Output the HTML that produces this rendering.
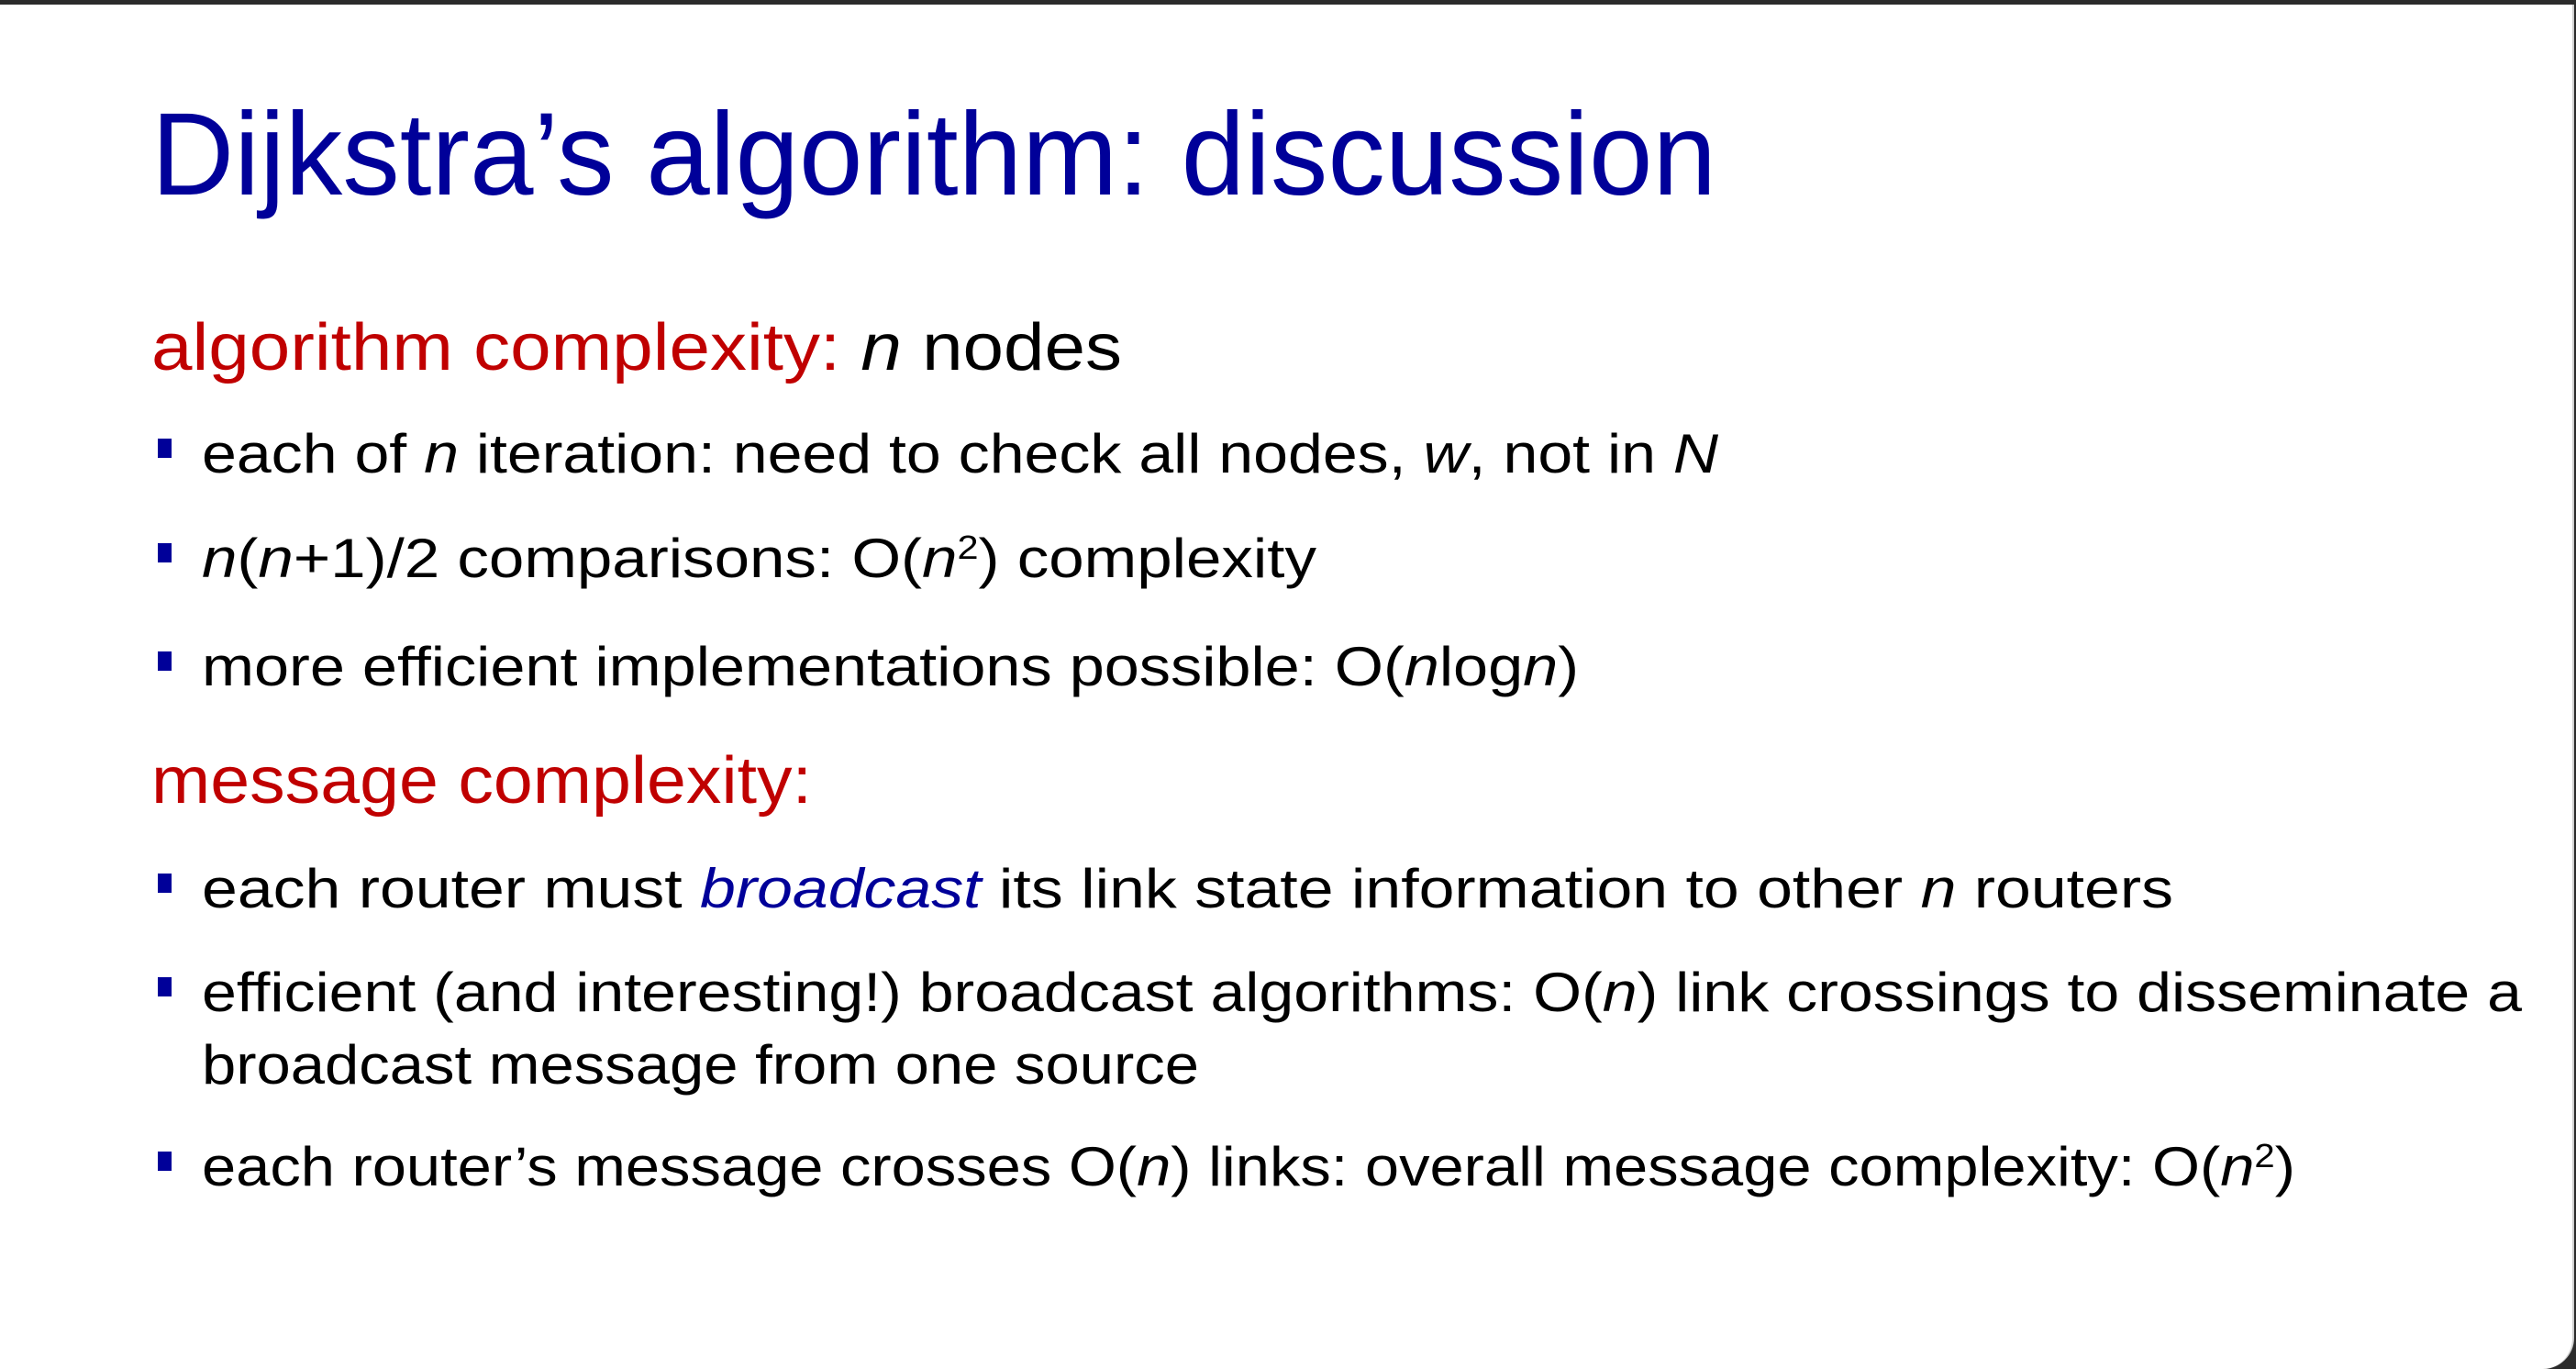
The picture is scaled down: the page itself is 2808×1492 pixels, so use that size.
<!DOCTYPE html>
<html><head><meta charset="utf-8"><style>
html,body{margin:0;padding:0;width:2808px;height:1492px;overflow:hidden;background:#2b2b2b}
#p{position:absolute;left:0;top:5px;width:2806px;height:1487px;background:#fff;border-bottom-right-radius:34px;border-right:2px solid #cfcfcf;box-sizing:border-box}
.t{position:absolute;white-space:nowrap;line-height:0;font-family:"Liberation Sans",sans-serif;transform-origin:0 0}
.title{font-size:128px;color:#000099;left:165px}
.h{font-size:72px;color:#c00000;left:165px}
.b{font-size:60px;color:#000;left:220px}
.sq{position:absolute;width:15px;height:21px;background:#000099;left:172px}
i{font-style:italic}
sup{font-size:0.6em;line-height:0;vertical-align:baseline;position:relative;top:-0.55em}
.bl{color:#000099}
.k{color:#000}
</style></head><body><div id="p"></div>
<div class="t title" style="top:169px" data-x="1706">Dijkstra’s algorithm: discussion</div>
<div class="t h" style="top:379px" data-x="1058">algorithm complexity: <span class="k"><i>n</i> nodes</span></div>
<div class="sq" style="top:478px"></div>
<div class="t b" style="top:495px" data-x="1653">each of <i>n</i> iteration: need to check all nodes, <i>w</i>, not in <i>N</i></div>
<div class="sq" style="top:592px"></div>
<div class="t b" style="top:609px" data-x="1215"><i>n</i>(<i>n</i>+1)/2 comparisons: O(<i>n</i><sup>2</sup>) complexity</div>
<div class="sq" style="top:710px"></div>
<div class="t b" style="top:727px" data-x="1501">more efficient implementations possible: O(<i>n</i>log<i>n</i>)</div>
<div class="t h" style="top:851px" data-x="720">message complexity:</div>
<div class="sq" style="top:952px"></div>
<div class="t b" style="top:969px" data-x="2149">each router must <i class="bl">broadcast</i> its link state information to other <i>n</i> routers</div>
<div class="sq" style="top:1065px"></div>
<div class="t b" style="top:1082px" data-x="2529">efficient (and interesting!) broadcast algorithms: O(<i>n</i>) link crossings to disseminate a</div>
<div class="t b" style="top:1161px" data-x="1087">broadcast message from one source</div>
<div class="sq" style="top:1255px"></div>
<div class="t b" style="top:1272px" data-x="2282">each router’s message crosses O(<i>n</i>) links: overall message complexity: O(<i>n</i><sup>2</sup>)</div>
<script>
document.querySelectorAll('.t').forEach(function(e){var w=+e.getAttribute('data-x');var c=e.getBoundingClientRect().width;if(c>0)e.style.transform='scaleX('+(w/c)+')';});
</script>
</body></html>
